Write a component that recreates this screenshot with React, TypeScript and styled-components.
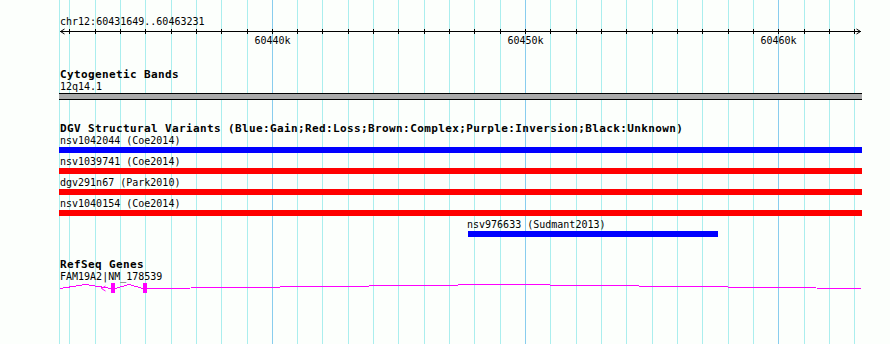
import React from "react";
import styled, { createGlobalStyle } from "styled-components";

// view window and pixel scale of the browser panel
const VIEW_START = 60431649;
const VIEW_END = 60463231;
const PX_PER_BP = 0.02532;
const X0 = 60.9;
const TRACK_LEFT = 59;
const TRACK_RIGHT = 862;
const PAGE_W = 890;
const PAGE_H = 344;

const MONO = '"DejaVu Sans Mono", "Liberation Mono", monospace';

const xOf = (bp: number) => X0 + (bp - VIEW_START) * PX_PER_BP;
const col = (x: number) => Math.floor(x) + 0.5;

type VariantKind = "gain" | "loss";

interface Variant {
  id: string;
  study: string;
  kind: VariantKind;
  start: number;
  end: number;
}

const variants: Variant[] = [
  { id: "nsv1042044", study: "Coe2014", kind: "gain", start: 60400000, end: 60500000 },
  { id: "nsv1039741", study: "Coe2014", kind: "loss", start: 60400000, end: 60500000 },
  { id: "dgv291n67", study: "Park2010", kind: "loss", start: 60400000, end: 60500000 },
  { id: "nsv1040154", study: "Coe2014", kind: "loss", start: 60400000, end: 60500000 },
  { id: "nsv976633", study: "Sudmant2013", kind: "gain", start: 60447727, end: 60457610 },
];

const kinds: Record<VariantKind, string> = {
  gain: "#0000ff",
  loss: "#ff0000",
};

const GlobalStyle = createGlobalStyle`
  html, body {
    margin: 0;
    padding: 0;
    background: #fcfffc;
  }
  body {
    font-family: ${MONO};
    color: #000000;
  }
`;

const Page = styled.div`
  position: relative;
  width: ${PAGE_W}px;
  height: ${PAGE_H}px;
  overflow: hidden;
  background: #fcfffc;
`;

const GridLayer = styled.svg`
  position: absolute;
  top: 0;
  left: 0;
  z-index: 0;
`;

const Content = styled.div`
  position: relative;
  z-index: 1;
  display: flex;
  flex-direction: column;
  padding-top: 16px;
`;

const Small = styled.div`
  font-family: ${MONO};
  font-size: 10px;
  line-height: 12px;
  height: 12px;
  white-space: nowrap;
  color: #000000;
`;

const PositionLabel = styled(Small)`
  padding-left: 60px;
`;

const Ruler = styled.svg`
  display: block;
  flex: none;
`;

const Track = styled.section<{ $above: number }>`
  display: flex;
  flex-direction: column;
  align-items: flex-start;
  margin-top: ${(p) => p.$above}px;
  padding-left: ${TRACK_LEFT}px;
  width: ${TRACK_RIGHT - TRACK_LEFT}px;
`;

const TrackTitle = styled.h3`
  margin: 0;
  font-family: ${MONO};
  font-weight: 700;
  font-size: 11px;
  letter-spacing: 0.38px;
  line-height: 13px;
  height: 13px;
  white-space: nowrap;
  padding-left: 1px;
`;

const TrackLabel = styled(Small)`
  padding-left: 1px;
`;

const BandBar = styled.div`
  width: 100%;
  height: 5px;
  background: #aaaaaa;
  border-top: 1px solid #000000;
  border-bottom: 1px solid #000000;
`;

const FeatureRow = styled.div`
  display: flex;
  flex-direction: column;
  align-items: flex-start;
  padding-bottom: 3px;
  width: 100%;
`;

const FeatureBar = styled.div<{ $kind: VariantKind }>`
  height: 6px;
  background: ${(p) => kinds[p.$kind]};
`;

const GeneGlyph = styled.svg`
  display: block;
  flex: none;
`;

function Grid() {
  const lines = [
    <line key="edge" x1={59.5} x2={59.5} y1={0} y2={PAGE_H} stroke="#aaeeee" />,
  ];
  for (let kb = 60432; kb <= 60463; kb++) {
    const x = col(xOf(kb * 1000));
    const major = kb % 10 === 0;
    lines.push(
      <line key={kb} x1={x} x2={x} y1={0} y2={PAGE_H} stroke={major ? "#88cdee" : "#aaeeee"} />
    );
  }
  return (
    <GridLayer width={PAGE_W} height={PAGE_H} shapeRendering="crispEdges">
      {lines}
    </GridLayer>
  );
}

function Scale() {
  const ticks = [];
  const labels = [];
  for (let kb = 60432; kb <= 60463; kb++) {
    const x = col(xOf(kb * 1000));
    ticks.push(<line key={kb} x1={x} x2={x} y1={1} y2={6} />);
    if (kb % 10 === 0) {
      labels.push(
        <text key={kb} x={x} y={15.5} textAnchor="middle" fontFamily={MONO} fontSize={10} fill="#000">
          {kb}k
        </text>
      );
    }
  }
  return (
    <Ruler width={PAGE_W} height={20}>
      <g shapeRendering="crispEdges" stroke="#000">
        <line x1={60} x2={861} y1={3.5} y2={3.5} />
        {ticks}
      </g>
      <g fill="none" stroke="#000">
        <polyline points="64.5,1 60.5,3.5 64.5,6" />
        <polyline points="856.5,1 860.5,3.5 856.5,6" />
      </g>
      {labels}
    </Ruler>
  );
}

function VariantRow({ v }: { v: Variant }) {
  const left = Math.max(xOf(v.start), TRACK_LEFT);
  const right = Math.min(xOf(v.end), TRACK_RIGHT);
  const labelAt = Math.round(Math.max(xOf(v.start), X0) - 1 - TRACK_LEFT);
  return (
    <FeatureRow>
      <Small style={{ marginLeft: labelAt }}>
        {v.id} ({v.study})
      </Small>
      <FeatureBar
        $kind={v.kind}
        style={{ marginLeft: Math.round(left - TRACK_LEFT), width: Math.round(right - left) }}
      />
    </FeatureRow>
  );
}

function Gene() {
  // x relative to the track's left edge, line on row 5 of the glyph
  const ox = TRACK_LEFT;
  const y = 5.5;
  const peak = 1.5;
  const hat = (a: number, b: number) =>
    `${a - ox},${y} ${(a + b) / 2 - ox},${peak} ${b - ox},${y}`;
  return (
    <GeneGlyph width={TRACK_RIGHT - TRACK_LEFT} height={11}>
      <g fill="none" stroke="#ff00ff" shapeRendering="crispEdges">
        <polyline points={hat(60, 111)} />
        <polyline points={hat(115, 143)} />
        <polyline points={hat(147, 861)} />
      </g>
      <polyline
        points={`${105.5 - ox},3 ${101.5 - ox},${y} ${105.5 - ox},8`}
        fill="none"
        stroke="#ff00ff"
      />
      <rect x={111 - ox} y={0} width={4} height={10} fill="#ff00ff" />
      <rect x={143 - ox} y={0} width={4} height={10} fill="#ff00ff" />
    </GeneGlyph>
  );
}

export default function App() {
  return (
    <>
      <GlobalStyle />
      <Page>
        <Grid />
        <Content>
          <PositionLabel>
            chr12:{VIEW_START}..{VIEW_END}
          </PositionLabel>
          <Scale />

          <Track $above={20}>
            <TrackTitle>Cytogenetic Bands</TrackTitle>
            <TrackLabel>12q14.1</TrackLabel>
            <BandBar />
          </Track>

          <Track $above={22}>
            <TrackTitle>
              DGV Structural Variants (Blue:Gain;Red:Loss;Brown:Complex;Purple:Inversion;Black:Unknown)
            </TrackTitle>
            {variants.map((v) => (
              <VariantRow key={v.id} v={v} />
            ))}
          </Track>

          <Track $above={18}>
            <TrackTitle>RefSeq Genes</TrackTitle>
            <TrackLabel>FAM19A2|NM_178539</TrackLabel>
            <Gene />
          </Track>
        </Content>
      </Page>
    </>
  );
}
